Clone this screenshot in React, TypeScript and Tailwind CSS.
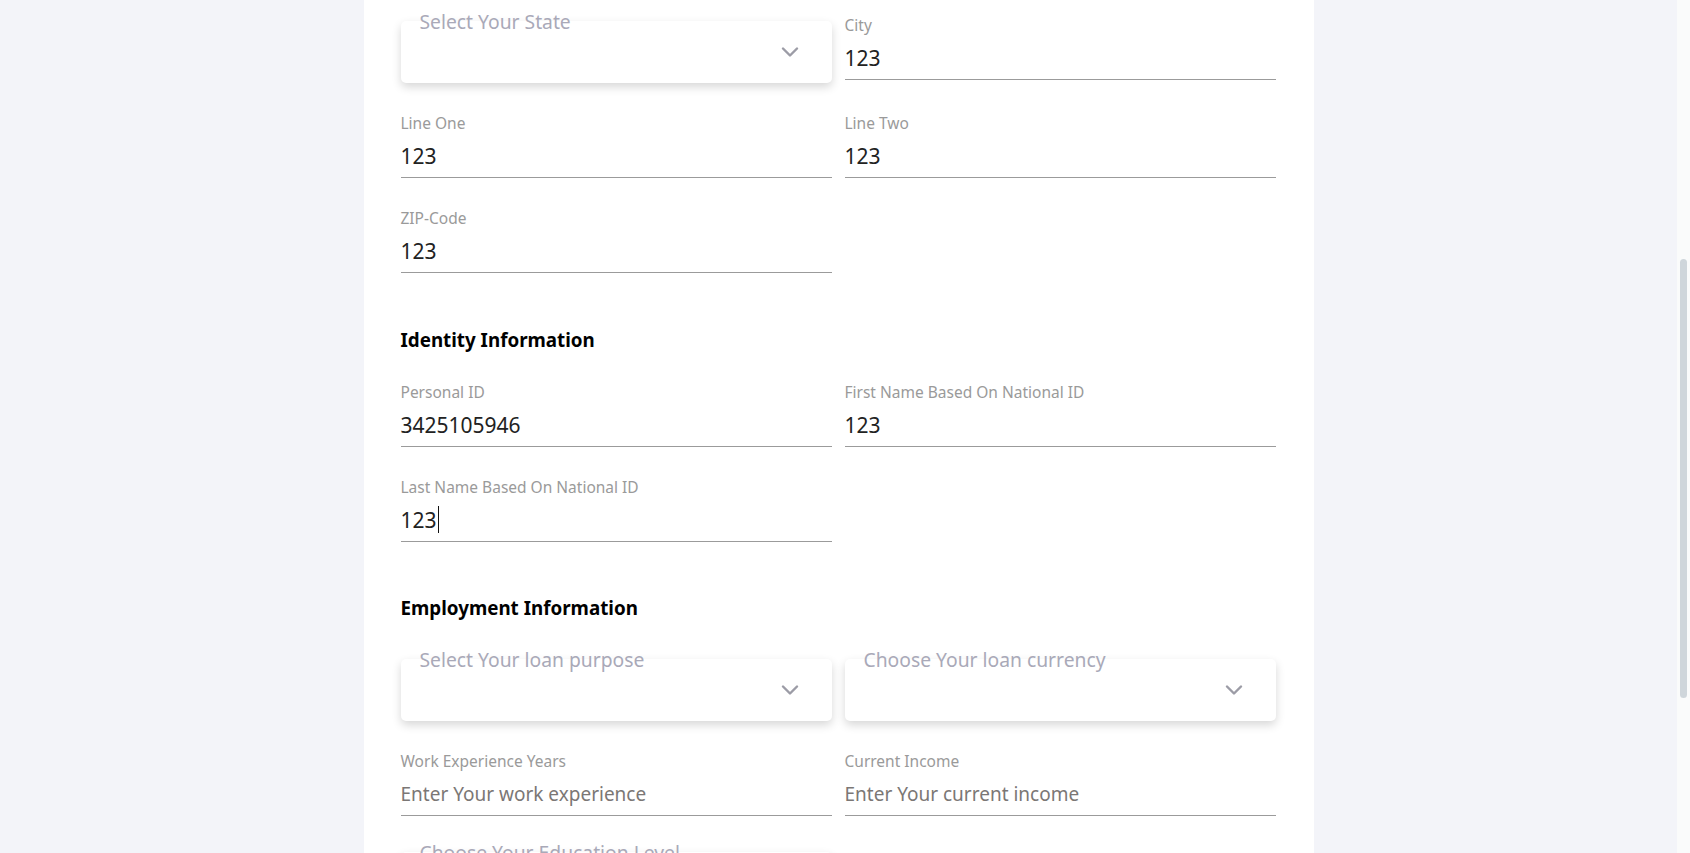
import { ChevronDown } from "lucide-react";

const font = { fontFamily: '"Noto Sans", "Open Sans", sans-serif' };

function Field({ label, value, placeholder, caret }: { label: string; value?: string; placeholder?: string; caret?: boolean }) {
  return (
    <div className="flex flex-col">
      <label className="h-5 text-[15.5px] leading-5 text-[#9a9a9a]">{label}</label>
      <div className="mt-2 flex h-[37px] items-start border-b border-[#9b9b9b] pt-[1px]">
        {value ? (
          <span className="text-[21px] leading-7 text-[#222]">{value}</span>
        ) : (
          <span className="text-[19px] leading-7 text-[#7b7775]">{placeholder}</span>
        )}
        {caret && <span className="ml-[1px] h-[27px] w-px bg-[#111]" />}
      </div>
    </div>
  );
}

function SelectBox({ label }: { label: string }) {
  return (
    <div className="relative pt-[6px]">
      <div className="flex h-[62px] items-center justify-end rounded-[5px] bg-white pr-[28px] shadow-[0_4px_10px_rgba(0,0,0,0.16)]">
        <ChevronDown className="h-[28px] w-[28px] text-[#9c9ca6]" strokeWidth={2.1} />
      </div>
      <span className="absolute left-[19px] top-[-7px] text-[19.3px] leading-7 text-[#a9a9b8]">{label}</span>
    </div>
  );
}

export default function App() {
  return (
    <div className="flex h-[853px] w-full overflow-hidden bg-[#f3f4f9]" style={font}>
      <div className="flex flex-1 justify-center">
        <div className="w-[950px] bg-white pl-[37px] pr-[38px] pt-[15px]">
          <div className="grid grid-cols-2 gap-x-[13px] gap-y-[30px]">
            <SelectBox label="Select Your State" />
            <Field label="City" value="123" />
            <Field label="Line One" value="123" />
            <Field label="Line Two" value="123" />
            <Field label="ZIP-Code" value="123" />
          </div>

          <h3 className="mt-[53px] mb-[28px] text-[18.8px] font-bold leading-7 text-black">Identity Information</h3>
          <div className="grid grid-cols-2 gap-x-[13px] gap-y-[30px]">
            <Field label="Personal ID" value="3425105946" />
            <Field label="First Name Based On National ID" value="123" />
            <Field label="Last Name Based On National ID" value="123" caret />
          </div>

          <h3 className="mt-[52px] mb-[31px] text-[18.8px] font-bold leading-7 text-black">Employment Information</h3>
          <div className="grid grid-cols-2 gap-x-[13px] gap-y-[30px]">
            <SelectBox label="Select Your loan purpose" />
            <SelectBox label="Choose Your loan currency" />
            <Field label="Work Experience Years" placeholder="Enter Your work experience" />
            <Field label="Current Income" placeholder="Enter Your current income" />
            <SelectBox label="Choose Your Education Level" />
          </div>
        </div>
      </div>
      <div className="relative w-[13px] shrink-0 bg-[#fafbfb]">
        <div className="absolute left-[3px] top-[259px] h-[439px] w-[7px] rounded-full bg-[#cfd6db]" />
      </div>
    </div>
  );
}
